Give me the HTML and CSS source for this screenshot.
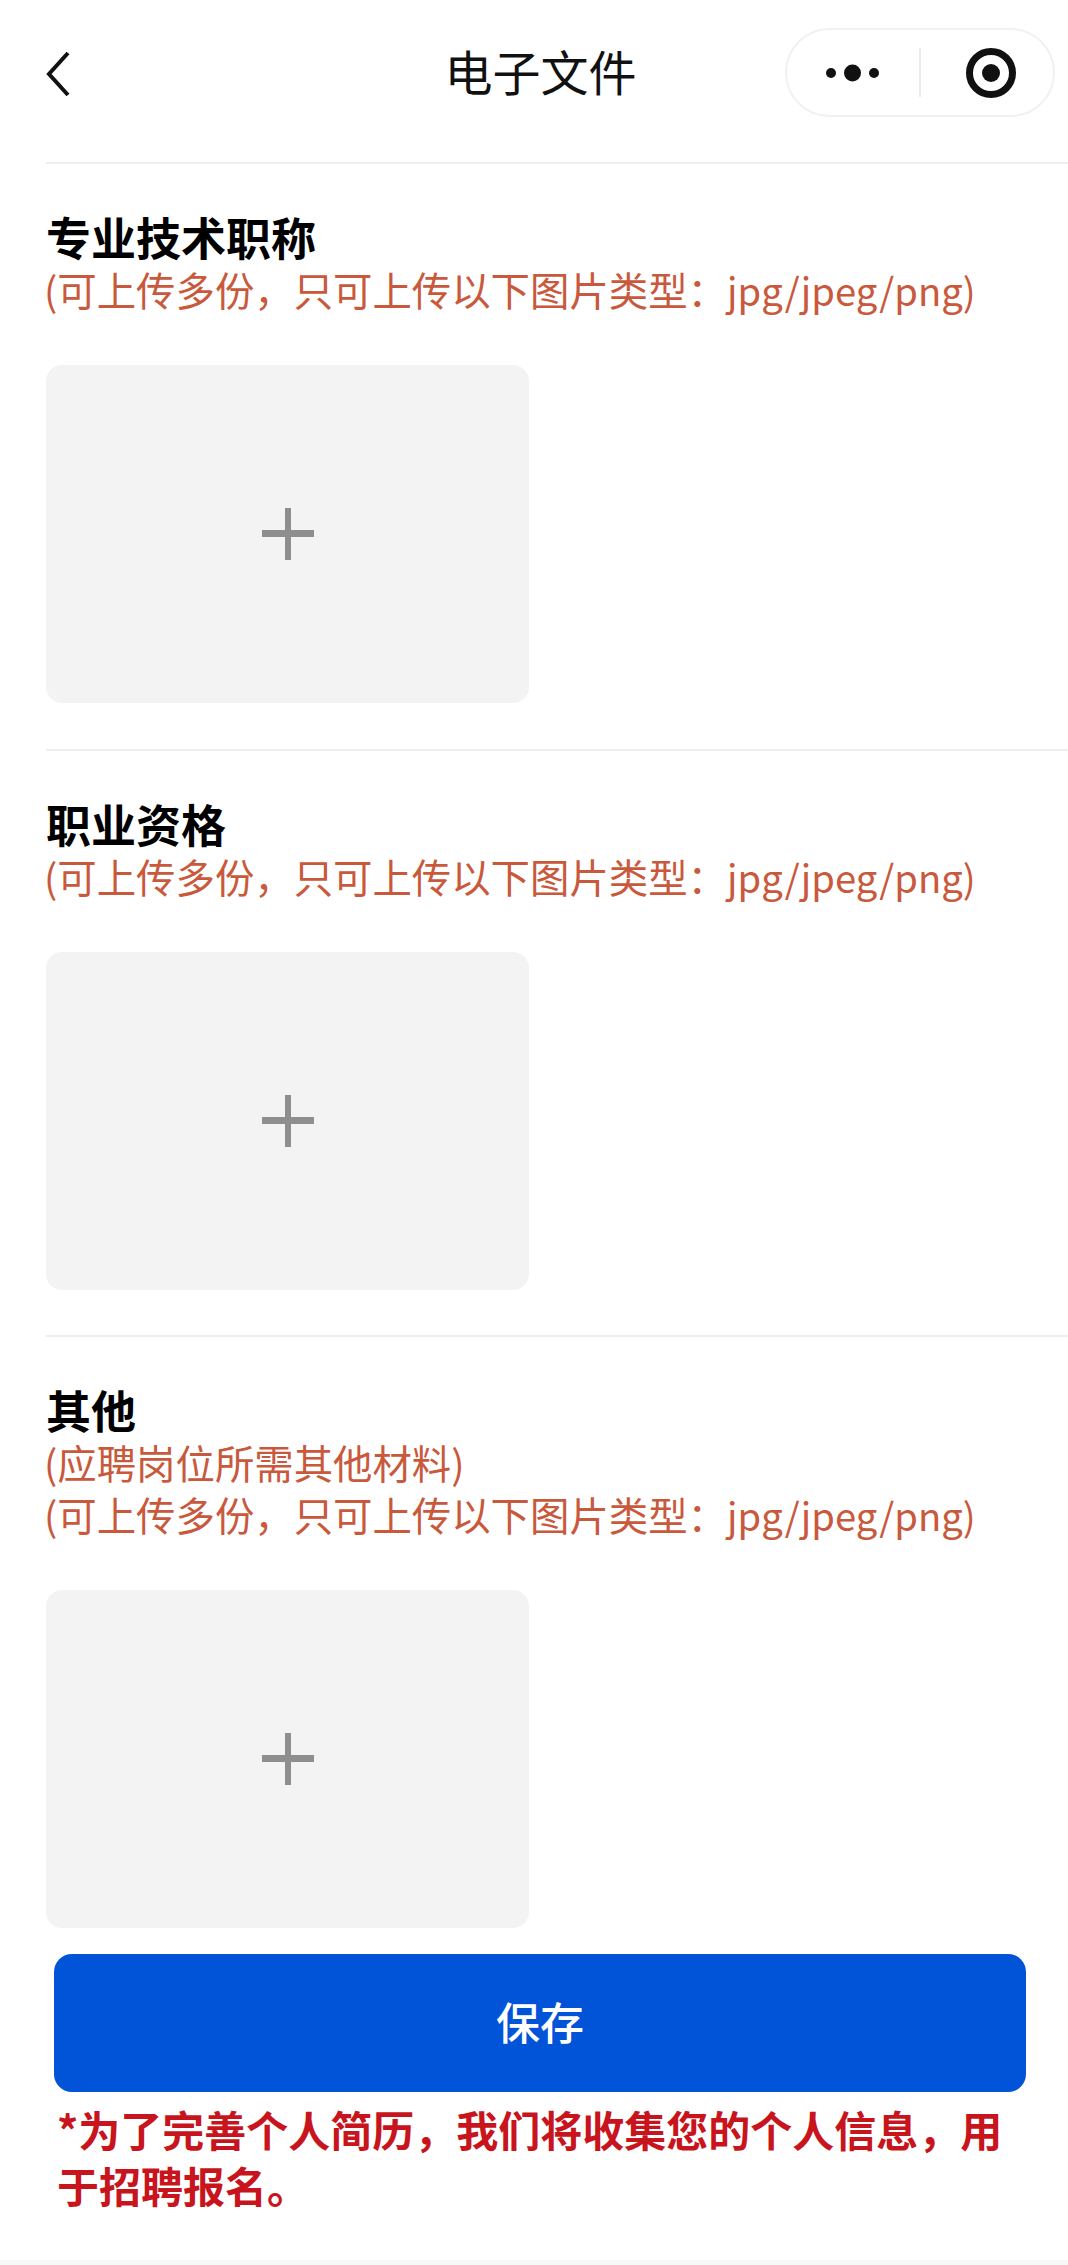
FILE: index.html
```html
<!DOCTYPE html>
<html lang="zh-CN">
<head>
<meta charset="UTF-8">
<meta name="viewport" content="width=device-width, initial-scale=1.0">
<title>电子文件</title>
<link rel="stylesheet" href="styles.css">
</head>
<body>
<div class="page">
  <header class="nav">
    <svg class="back" width="24" height="46" viewBox="0 0 24 46">
      <path d="M22 2 L3 23 L22 44" fill="none" stroke="#111" stroke-width="4"/>
    </svg>
    <div class="nav-title">电子文件</div>
    <div class="capsule">
      <svg class="more" width="56" height="18" viewBox="0 0 56 18">
        <circle cx="6" cy="9" r="5" fill="#111"/>
        <circle cx="27.5" cy="9" r="8.5" fill="#111"/>
        <circle cx="49" cy="9" r="5" fill="#111"/>
      </svg>
      <span class="capsule-line"></span>
      <svg class="target" width="50" height="50" viewBox="0 0 50 50">
        <circle cx="25" cy="25" r="21.5" fill="none" stroke="#111" stroke-width="7"/>
        <circle cx="25" cy="25" r="9" fill="#111"/>
      </svg>
    </div>
  </header>

  <section class="block">
    <h2 class="block-title">专业技术职称</h2>
    <p class="hint">(可上传多份，只可上传以下图片类型：<span class="ext">jpg/jpeg/png)</span></p>
    <div class="upload"><span class="plus"></span></div>
  </section>

  <section class="block">
    <h2 class="block-title">职业资格</h2>
    <p class="hint">(可上传多份，只可上传以下图片类型：<span class="ext">jpg/jpeg/png)</span></p>
    <div class="upload"><span class="plus"></span></div>
  </section>

  <section class="block last">
    <h2 class="block-title">其他</h2>
    <p class="hint">(应聘岗位所需其他材料)</p>
    <p class="hint">(可上传多份，只可上传以下图片类型：<span class="ext">jpg/jpeg/png)</span></p>
    <div class="upload"><span class="plus"></span></div>
  </section>

  <div class="actions">
    <button class="save">保存</button>
    <p class="notice">*为了完善个人简历，我们将收集您的个人信息，用于招聘报名。</p>
  </div>
  <div class="bottom-strip"></div>
</div>
</body>
</html>
```

FILE: styles.css
```css
body {
  margin: 0;
  background-color: #fff;
  font-family: "Noto Sans CJK SC", "Noto Sans", sans-serif;
  color: #000;
}
.page {
  display: flex;
  flex-direction: column;
  height: 2265px;
  overflow: hidden;
}

/* top bar */
.nav {
  display: grid;
  grid-template-columns: 1fr auto 1fr;
  align-items: center;
  height: 145px;
  padding: 0 13px 0 26px;
}
.back {
  margin: 2px 0 0 20px;
}
.nav-title {
  font-size: 48px;
  line-height: 60px;
  padding-bottom: 5px;
  color: #111;
}
.capsule {
  justify-self: end;
  display: flex;
  align-items: center;
  box-sizing: border-box;
  width: 270px;
  height: 89px;
  border: 2px solid #f1f1f1;
  border-radius: 45px;
}
.more {
  margin-left: 38px;
}
.capsule-line {
  width: 2px;
  height: 49px;
  margin-left: 38px;
  background-color: #ececec;
}
.target {
  margin-left: 45px;
}

/* upload sections */
.block {
  margin-left: 46px;
  margin-top: 17px;
  padding-top: 47px;
  border-top: 2px solid #eeeeee;
  margin-bottom: 29px;
}
.block.last {
  margin-top: 16px;
  margin-bottom: 0;
}
.block-title {
  margin: 0;
  font-size: 45px;
  line-height: 52px;
  font-weight: 700;
}
.hint {
  margin: 0 0 0 -2px;
  font-size: 39.4px;
  line-height: 52px;
  color: #c9593c;
}
.ext {
  font-size: 38.2px;
  line-height: 1;
}
.upload {
  display: flex;
  justify-content: center;
  align-items: center;
  width: 483px;
  height: 338px;
  margin-top: 50px;
  background-color: #f3f3f3;
  border-radius: 16px;
}
.plus {
  position: relative;
  width: 52px;
  height: 52px;
}
.plus::before,
.plus::after {
  content: "";
  position: absolute;
  background-color: #8e8e8e;
}
.plus::before {
  left: 0;
  right: 0;
  top: 22px;
  height: 7px;
}
.plus::after {
  top: 0;
  bottom: 0;
  left: 23px;
  width: 6px;
}

/* save button and notice */
.actions {
  padding: 26px 42px 0 54px;
}
.save {
  display: block;
  width: 972px;
  height: 138px;
  padding-bottom: 6px;
  border: none;
  border-radius: 18px;
  background-color: #0153d8;
  color: #fff;
  font-family: inherit;
  font-size: 44px;
  font-weight: 500;
}
.notice {
  margin: 9px 0 0 3px;
  font-size: 42px;
  line-height: 56px;
  font-weight: 700;
  color: #c8141c;
}
.bottom-strip {
  margin-top: auto;
  height: 5px;
  background-color: #f8f8f8;
}
```
